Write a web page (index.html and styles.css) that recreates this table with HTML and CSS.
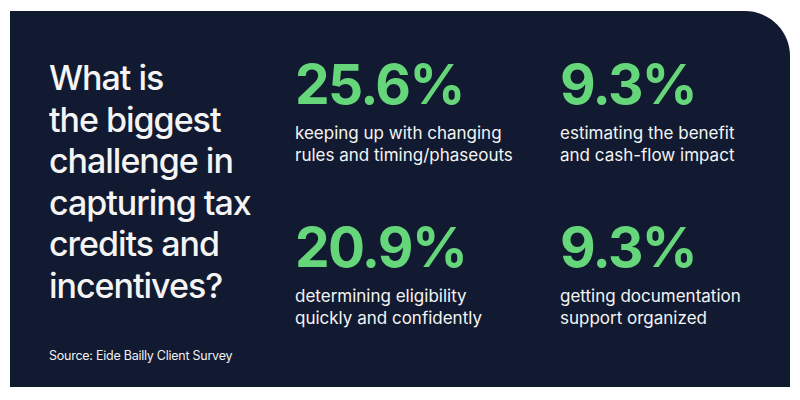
FILE: index.html
```html
<!DOCTYPE html>
<html lang="en">
<head>
<meta charset="utf-8">
<title>Tax credits survey</title>
<link rel="stylesheet" href="styles.css">
</head>
<body>
<main class="card">
  <section class="intro">
    <h1 class="question">What is<br>the biggest<br>challenge in<br>capturing tax<br>credits and<br>incentives?</h1>
    <p class="source">Source: Eide Bailly Client Survey</p>
  </section>
  <section class="stats">
    <div class="stat">
      <div class="value">25.6%</div>
      <p class="label">keeping up with changing<br>rules and timing/phaseouts</p>
    </div>
    <div class="stat">
      <div class="value">9.3%</div>
      <p class="label">estimating the benefit<br>and cash-flow impact</p>
    </div>
    <div class="stat">
      <div class="value">20.9%</div>
      <p class="label">determining eligibility<br>quickly and confidently</p>
    </div>
    <div class="stat">
      <div class="value">9.3%</div>
      <p class="label">getting documentation<br>support organized</p>
    </div>
  </section>
</main>
</body>
</html>
```
FILE: styles.css
```css
html, body {
  margin: 0;
  padding: 0;
  background: #ffffff;
}
body {
  font-family: Inter, "Liberation Sans", sans-serif;
}
.card {
  box-sizing: border-box;
  margin: 11px 10px 0 10px;
  width: 780px;
  height: 376px;
  background: #111a30;
  border-radius: 0 45px 0 0;
  padding: 0 0 0 39px;
  display: flex;
}
.intro {
  width: 246px;
  display: flex;
  flex-direction: column;
  padding-top: 46px;
}
.question {
  margin: 0;
  color: #f4f4f4;
  font-size: 34px;
  font-weight: 500;
  line-height: 41.5px;
  letter-spacing: -0.03em;
}
.source {
  margin: 42px 0 0 0;
  color: #f0f0f0;
  font-size: 12.5px;
  letter-spacing: -0.02em;
}
.stats {
  display: grid;
  grid-template-columns: 265px 200px;
  row-gap: 54px;
  padding-top: 46px;
  align-content: start;
}
.value {
  color: #66d67b;
  font-size: 55px;
  font-weight: 700;
  line-height: 55px;
  letter-spacing: -0.03em;
}
.label {
  margin: 10px 0 0 0;
  color: #f4f4f4;
  font-size: 17px;
  line-height: 22px;
  letter-spacing: 0;
}
```
